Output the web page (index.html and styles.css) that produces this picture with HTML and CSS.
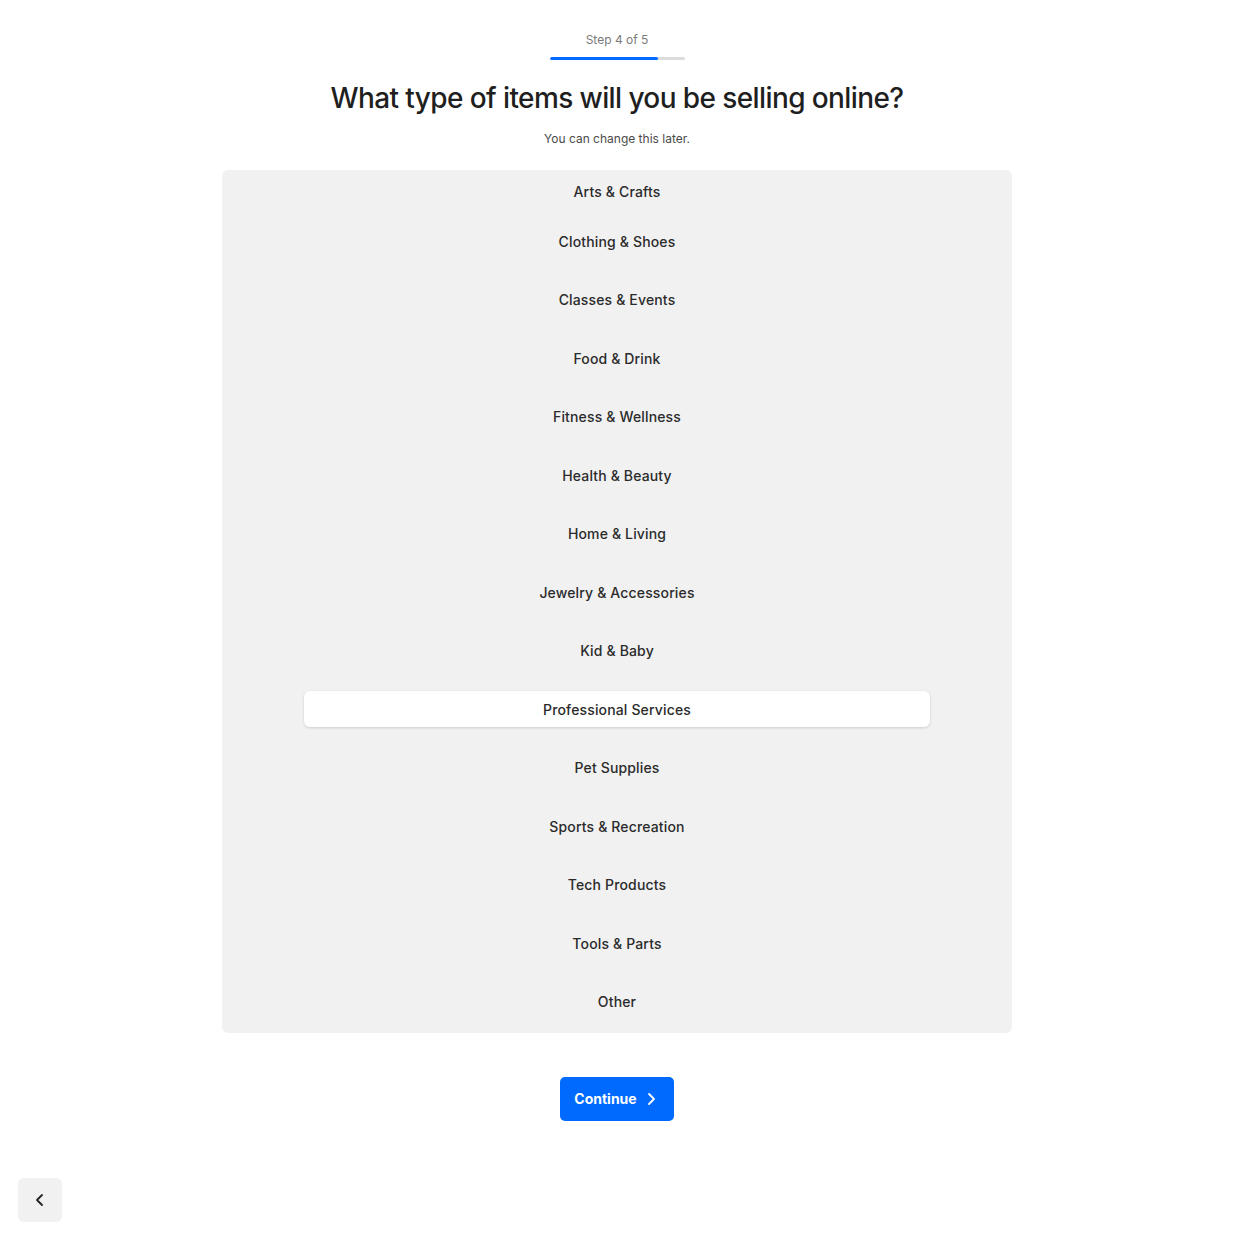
FILE: index.html
```html
<!DOCTYPE html>
<html>
<head>
<meta charset="utf-8">
<link rel="stylesheet" href="styles.css">
</head>
<body>
<div class="page">
  <div class="step">
    <div class="step-label">Step 4 of 5</div>
    <div class="progress"><div class="progress-fill"></div></div>
  </div>
  <h1 class="title">What type of items will you be selling online?</h1>
  <p class="subtitle">You can change this later.</p>
  <div class="panel">
    <div class="item first">Arts &amp; Crafts</div>
    <div class="item">Clothing &amp; Shoes</div>
    <div class="item">Classes &amp; Events</div>
    <div class="item">Food &amp; Drink</div>
    <div class="item">Fitness &amp; Wellness</div>
    <div class="item">Health &amp; Beauty</div>
    <div class="item">Home &amp; Living</div>
    <div class="item">Jewelry &amp; Accessories</div>
    <div class="item">Kid &amp; Baby</div>
    <div class="item selected">Professional Services</div>
    <div class="item">Pet Supplies</div>
    <div class="item">Sports &amp; Recreation</div>
    <div class="item">Tech Products</div>
    <div class="item">Tools &amp; Parts</div>
    <div class="item">Other</div>
  </div>
  <button class="continue">Continue
    <svg width="10" height="14" viewBox="0 0 10 14"><path d="M3 2l5 5-5 5" fill="none" stroke="#fff" stroke-width="1.8" stroke-linecap="round" stroke-linejoin="round"/></svg>
  </button>
</div>
<button class="back"><svg width="10" height="14" viewBox="0 0 10 14"><path d="M7 2L2 7l5 5" fill="none" stroke="#222" stroke-width="1.8" stroke-linecap="round" stroke-linejoin="round"/></svg></button>
</body>
</html>
```

FILE: styles.css
```css
* { box-sizing: border-box; }
html, body { margin: 0; padding: 0; background: #fff; }
body { font-family: Inter, "Noto Sans", sans-serif; color: #222; width: 1234px; height: 1240px; position: relative; overflow: hidden; }
.page { display: flex; flex-direction: column; align-items: center; padding-top: 32px; }
.step { display: flex; flex-direction: column; align-items: center; }
.step-label { font-size: 12px; color: #7a7a7a; line-height: 16px; }
.progress { width: 135px; height: 3px; background: #dcdcdc; border-radius: 2px; margin-top: 9px; overflow: hidden; }
.progress-fill { width: 80%; height: 100%; background: #006aff; border-radius: 2px; }
.title { font-size: 28px; font-weight: 500; letter-spacing: -0.6px; color: #1f1f1f; margin: 20px 0 0; line-height: 36px; }
.subtitle { font-size: 12px; color: #4a4a4a; margin: 15px 0 0; line-height: 16px; }
.panel { width: 790px; margin-top: 23px; background: #f1f1f1; border-radius: 6px; padding: 3px 82px 13px; display: flex; flex-direction: column; gap: 22.54px; }
.item { height: 36px; display: flex; align-items: center; justify-content: center; font-size: 14px; font-weight: 500; color: #2b2b2b; border-radius: 6px; letter-spacing: 0.15px; }
.item.first { margin-bottom: -8.54px; }
.item.selected { background: #fff; box-shadow: 0 1px 3px rgba(0,0,0,0.15); }
.continue { margin-top: 44px; width: 114px; height: 44px; border: none; border-radius: 5px; background: #006aff; color: #fff; font-family: Inter, "Noto Sans", sans-serif; font-size: 14px; font-weight: 700; display: flex; align-items: center; justify-content: center; gap: 9px; padding: 0 4px 0 0; }
.back { position: absolute; left: 18px; top: 1178px; width: 44px; height: 44px; border: none; border-radius: 6px; background: #f1f1f1; display: flex; align-items: center; justify-content: center; padding: 0; }
```
